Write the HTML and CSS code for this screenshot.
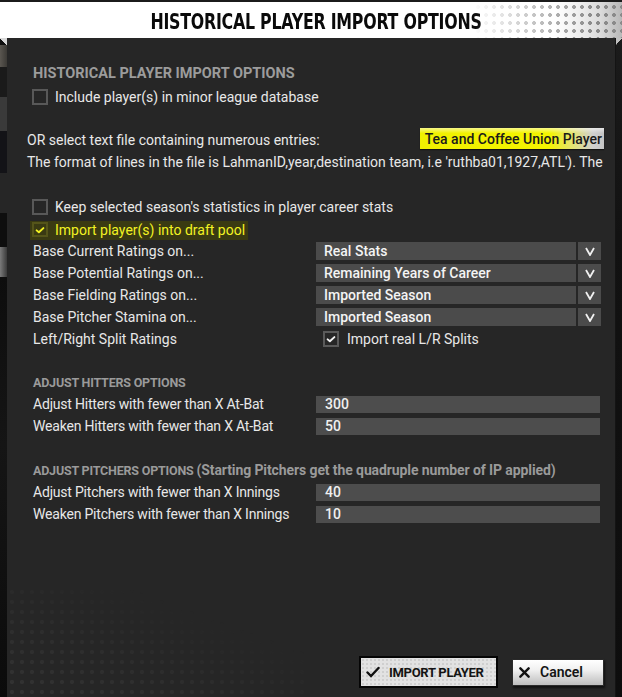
FILE: index.html
```html
<!DOCTYPE html>
<html lang="en">
<head>
<meta charset="utf-8">
<title>Historical Player Import Options</title>
<link rel="stylesheet" href="styles.css">
</head>
<body>
<div class="screen">
  <header class="titlebar">
    <h1 class="title">HISTORICAL PLAYER IMPORT OPTIONS</h1>
    <div class="title-dots"></div>
  </header>
  <div class="main">
    <div class="strip strip-left">
      <div class="fold"></div>
      <div class="blk blk-a"></div>
      <div class="blk blk-b"></div>
      <div class="blk blk-c"></div>
      <div class="blk blk-d"></div>
      <div class="blk blk-e"></div>
      <div class="blk blk-f"></div>
      <div class="blk blk-g"></div>
      <div class="blk blk-h"></div>
    </div>
    <section class="dialog">
      <h2 class="sec-head sec-big">HISTORICAL PLAYER IMPORT OPTIONS</h2>
      <div class="check-row">
        <span class="cb"></span>
        <span class="label">Include player(s) in minor league database</span>
      </div>
      <div class="file-row">
        <span class="label">OR select text file containing numerous entries:</span>
        <div class="file-input"><span class="file-text">Tea and Coffee Union Player</span></div>
      </div>
      <div class="format-line">The format of lines in the file is LahmanID,year,destination team, i.e 'ruthba01,1927,ATL'). The</div>
      <div class="check-row keep-row">
        <span class="cb"></span>
        <span class="label">Keep selected season's statistics in player career stats</span>
      </div>
      <div class="check-row hl-row">
        <span class="cb cb-hl"><svg viewBox="0 0 16 16" class="tick"><polyline points="3.5,8.5 6.5,11 12.5,5.5"/></svg></span>
        <span class="label">Import player(s) into draft pool</span>
      </div>
      <div class="rating-grid">
        <span class="label">Base Current Ratings on...</span>
        <div class="select">Real Stats</div>
        <div class="arrow"><svg viewBox="0 0 10 9"><polyline points="1,1 5,8 9,1"/></svg></div>

        <span class="label">Base Potential Ratings on...</span>
        <div class="select">Remaining Years of Career</div>
        <div class="arrow"><svg viewBox="0 0 10 9"><polyline points="1,1 5,8 9,1"/></svg></div>

        <span class="label">Base Fielding Ratings on...</span>
        <div class="select">Imported Season</div>
        <div class="arrow"><svg viewBox="0 0 10 9"><polyline points="1,1 5,8 9,1"/></svg></div>

        <span class="label">Base Pitcher Stamina on...</span>
        <div class="select">Imported Season</div>
        <div class="arrow"><svg viewBox="0 0 10 9"><polyline points="1,1 5,8 9,1"/></svg></div>

        <span class="label">Left/Right Split Ratings</span>
        <div class="split-check">
          <span class="cb"><svg viewBox="0 0 16 16" class="tick"><polyline points="3.5,8.5 6.5,11 12.5,5.5"/></svg></span>
          <span class="label">Import real L/R Splits</span>
        </div>
      </div>

      <h3 class="sec-head sec-small hitters-head">ADJUST HITTERS OPTIONS</h3>
      <div class="field-grid hitters">
        <span class="label cond">Adjust Hitters with fewer than X At-Bat</span>
        <div class="num">300</div>
        <span class="label cond">Weaken Hitters with fewer than X At-Bat</span>
        <div class="num">50</div>
      </div>

      <h3 class="sec-head sec-small pitchers-head">ADJUST PITCHERS OPTIONS <span class="paren">(Starting Pitchers get the quadruple number of IP applied)</span></h3>
      <div class="field-grid pitchers">
        <span class="label cond">Adjust Pitchers with fewer than X Innings</span>
        <div class="num">40</div>
        <span class="label cond">Weaken Pitchers with fewer than X Innings</span>
        <div class="num">10</div>
      </div>

      <div class="actions">
        <button class="btn btn-import" type="button">
          <svg viewBox="0 0 14 12" class="btn-icon"><polyline points="1.5,6.5 5,10 12.5,2"/></svg>
          <span>IMPORT PLAYER</span>
        </button>
        <button class="btn btn-cancel" type="button">
          <svg viewBox="0 0 12 12" class="btn-icon x-icon"><path d="M1.5 1.5 L10.5 10.5 M10.5 1.5 L1.5 10.5"/></svg>
          <span>Cancel</span>
        </button>
      </div>
    </section>
    <div class="strip strip-right">
      <div class="fold fold-r"></div>
    </div>
  </div>
</div>
</body>
</html>
```

FILE: styles.css
```css
* { box-sizing: border-box; }

html, body {
  margin: 0;
  padding: 0;
  background: #111;
}

body {
  font-family: Roboto, "Liberation Sans", Arial, sans-serif;
  font-size: 14px;
  color: #e8e8e8;
}

.screen {
  width: 622px;
  height: 697px;
  display: flex;
  flex-direction: column;
  overflow: hidden;
}

/* ---------- title bar ---------- */
.titlebar {
  position: relative;
  height: 38px;
  flex: none;
  background: #fff;
  border-top: 2px solid #1b1b1b;
  display: flex;
  align-items: center;
  justify-content: center;
  padding-left: 11px;
}

.title {
  margin: 0;
  font-family: "DejaVu Sans Condensed", "Liberation Sans", sans-serif;
  font-weight: 700;
  font-size: 22px;
  letter-spacing: -0.3px;
  color: #0a0a0a;
  line-height: 1;
  white-space: nowrap;
  position: relative;
  top: 2px;
  transform: scaleX(0.8);
}

.title-dots {
  position: absolute;
  right: 0;
  top: 0;
  bottom: 0;
  width: 150px;
  background-image:
    radial-gradient(circle, #8a8a8a 0, #8a8a8a 1.6px, transparent 2.2px),
    linear-gradient(to right, #fff 0%, #fff 55%, #dcdcdc 85%, #b8b8b8 100%);
  background-size: 8px 8px, 100% 100%;
  background-position: 2px 1px, 0 0;
  -webkit-mask-image: linear-gradient(to right, transparent 0%, rgba(0,0,0,0.35) 30%, #000 80%);
  mask-image: linear-gradient(to right, transparent 0%, rgba(0,0,0,0.35) 30%, #000 80%);
}

/* ---------- main area ---------- */
.main {
  flex: 1;
  display: flex;
  min-height: 0;
}

.strip {
  flex: none;
  width: 7px;
  display: flex;
  flex-direction: column;
  background: #0c0c0c;
}

.strip-left { background: #101010; }

.fold {
  height: 7px;
  background: linear-gradient(to bottom left, #d8d8d8 50%, transparent 51%);
}

.blk { flex: none; }
.blk-a { height: 22px; background: linear-gradient(to right, #5a5650, #3c3a36); }
.blk-b { height: 30px; background: #1a1a1a; }
.blk-c { height: 34px; background: #3a3a3a; }
.blk-d { height: 42px; background: #131317; }
.blk-e { height: 40px; background: #262626; }
.blk-f { height: 34px; background: #0e0e0e; }
.blk-g { height: 30px; background: linear-gradient(to right, #7a7a7a, #3a3a3a); }
.blk-h { flex: 1; background: linear-gradient(to bottom, #0d0d0d, #151515 40%, #0b0b0b); }

.strip-right {
  background: linear-gradient(to bottom, #1b1b1b, #121212 30%, #0d0d0d);
  border-left: 1px solid #141414;
}
.fold-r {
  background: linear-gradient(to bottom right, #c0c0c0 50%, transparent 51%);
}

/* ---------- dialog ---------- */
.dialog {
  position: relative;
  flex: none;
  width: 608px;
  height: 659px;
  background: #262626;
  display: flex;
  flex-direction: column;
  padding: 27px 11px 9px 25px;
  overflow: hidden;
}

.dialog::before {
  content: "";
  position: absolute;
  left: 0;
  bottom: 0;
  width: 300px;
  height: 110px;
  background-image: radial-gradient(circle, #333 0, #333 1.8px, transparent 2.4px);
  background-size: 10px 10px;
  -webkit-mask-image: linear-gradient(to top right, #000 0%, rgba(0,0,0,0.6) 35%, transparent 70%);
  mask-image: linear-gradient(to top right, #000 0%, rgba(0,0,0,0.6) 35%, transparent 70%);
  pointer-events: none;
}

.dialog > * { position: relative; }

.label {
  white-space: nowrap;
  color: #e8e8e8;
}

.sec-head {
  margin: 0;
  font-weight: 700;
  color: #9c9c9c;
  white-space: nowrap;
}

.sec-big {
  font-size: 14.5px;
  line-height: 18px;
  height: 18px;
  padding-left: 1px;
}

.sec-small {
  font-size: 12.5px;
  line-height: 18px;
  height: 18px;
  margin-top: 24px;
  letter-spacing: -0.2px;
  padding-left: 1px;
  color: #9a9a9a;
}

.paren {
  font-size: 14px;
  letter-spacing: -0.1px;
}

/* checkbox rows */
.check-row {
  display: flex;
  align-items: center;
  gap: 7px;
  height: 22px;
  margin-top: 3px;
}

.keep-row { margin-top: 23px; }

.cb {
  flex: none;
  width: 16px;
  height: 16px;
  border: 2px solid #585858;
  display: flex;
  align-items: center;
  justify-content: center;
}

.tick {
  width: 14px;
  height: 14px;
  fill: none;
  stroke: #f2f2f2;
  stroke-width: 2.6;
  stroke-linecap: round;
  stroke-linejoin: round;
}

.hl-row {
  height: 19px;
  margin-top: 3px;
  margin-left: -2px;
  padding: 0 3px 2px 2px;
  align-self: flex-start;
  background: #3a3a12;
}

.hl-row .label { color: #f2f222; }

.cb-hl {
  border-color: #55551a;
  width: 16px;
  height: 15px;
}
.cb-hl .tick { stroke: #f2f222; }

/* file row */
.file-row {
  display: flex;
  justify-content: space-between;
  align-items: center;
  height: 22px;
  margin-top: 21px;
  margin-left: -5px;
}

.file-input {
  align-self: flex-start;
  margin-top: -1px;
  width: 184px;
  height: 21px;
  display: flex;
  align-items: center;
  justify-content: flex-end;
  padding-right: 2px;
  overflow: hidden;
  background:
    linear-gradient(to bottom, rgba(255,255,255,0.55) 0%, rgba(255,255,255,0) 25%),
    linear-gradient(to right, #f0f000 0%, #f4f400 70%, #e2e27a 84%, #d0d0d0 94%, #c4c4c4 100%);
  box-shadow: 0 1px 1px rgba(0,0,0,0.5);
}

.file-text {
  color: #1a1a1a;
  font-weight: 500;
  white-space: nowrap;
}

.format-line {
  height: 22px;
  line-height: 22px;
  margin-left: -5px;
  white-space: nowrap;
  color: #e8e8e8;
}

/* ratings */
.rating-grid {
  display: grid;
  grid-template-columns: 282px 260px 23px;
  grid-auto-rows: 22px;
  column-gap: 2px;
  align-items: center;
}

.rating-grid > .label { padding-left: 1px; }

.select {
  height: 18px;
  background: #4b4b4b;
  color: #f4f4f4;
  font-weight: 500;
  line-height: 18px;
  padding-left: 8px;
  white-space: nowrap;
}

.arrow {
  height: 18px;
  background: #4b4b4b;
  display: flex;
  align-items: center;
  justify-content: center;
}

.arrow svg {
  width: 10px;
  height: 9px;
  fill: none;
  stroke: #f0f0f0;
  stroke-width: 1.8;
  stroke-linejoin: miter;
}

.split-check {
  grid-column: 2 / span 2;
  display: flex;
  align-items: center;
  gap: 8px;
  padding-left: 7px;
}

.split-check .cb { border-color: #5a5a5a; }

/* numeric fields */
.field-grid {
  display: grid;
  grid-template-columns: 282px 284px;
  column-gap: 2px;
  grid-auto-rows: 22px;
  align-items: center;
}

.hitters { margin-top: 1px; }
.pitchers { margin-top: 2px; }

.cond {
  letter-spacing: -0.2px;
  padding-left: 1px;
}

.num {
  height: 17px;
  background: #4d4d4d;
  color: #f0f0f0;
  font-weight: 500;
  line-height: 17px;
  padding-left: 9px;
}

/* actions */
.actions {
  margin-top: auto;
  display: flex;
  justify-content: flex-end;
  align-items: center;
  gap: 14px;
}

.btn {
  display: flex;
  align-items: center;
  font-family: Roboto, "Liberation Sans", sans-serif;
  font-weight: 700;
  font-size: 14px;
  color: #141414;
  cursor: pointer;
  padding: 0;
  white-space: nowrap;
}

.btn-import {
  width: 139px;
  height: 32px;
  border: 2px solid #050505;
  background-color: #e2e2e2;
  background-image: radial-gradient(circle, #cfcfcf 0, #cfcfcf 0.9px, transparent 1.3px);
  background-size: 4px 4px;
  padding-left: 5px;
  gap: 9px;
  font-size: 13px;
  letter-spacing: -0.3px;
}

.btn-cancel {
  width: 92px;
  height: 27px;
  border: 1px solid #2a2a2a;
  background: linear-gradient(to bottom, #ffffff 0%, #f0f0f0 40%, #bdbdbd 100%);
  box-shadow: 1px 2px 2px rgba(0,0,0,0.6);
  padding-left: 6px;
  gap: 10px;
  font-weight: 600;
}

.btn-icon {
  width: 14px;
  height: 12px;
  fill: none;
  stroke: #111;
  stroke-width: 2.4;
  stroke-linecap: round;
}

.x-icon {
  width: 11px;
  height: 11px;
  stroke-width: 2.6;
}
```
